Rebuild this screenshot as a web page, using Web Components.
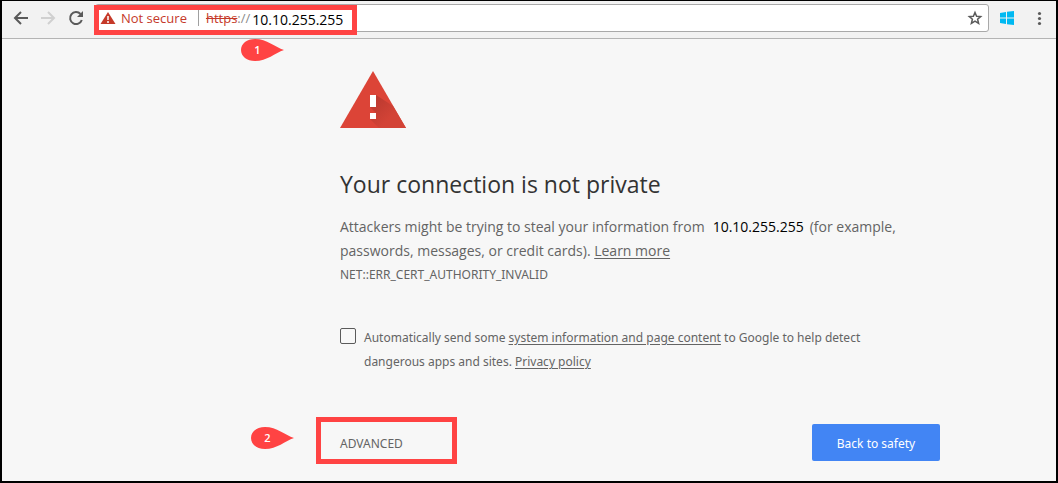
<!DOCTYPE html>
<html lang="en">
<head>
<meta charset="utf-8">
<title>Privacy error</title>
<style>
html { height: 100%; }
body { margin: 0; min-height: 100%; display: grid; font-family: "Open Sans", "Noto Sans", sans-serif; background: #000; }
</style>
</head>
<body>
<browser-window>
  <browser-toolbar slot="toolbar" host="10.10.255.255"></browser-toolbar>
  <privacy-error host="10.10.255.255"></privacy-error>
</browser-window>
<script>
const define = (name, html, setup) => {
  const template = document.createElement('template');
  template.innerHTML = html;
  customElements.define(name, class extends HTMLElement {
    constructor() {
      super();
      this.attachShadow({ mode: 'open' }).append(template.content.cloneNode(true));
    }
    connectedCallback() { if (setup) setup(this, this.shadowRoot); }
  });
};

define('step-marker', `
<style>
:host { display: block; position: relative; width: 43px; height: 22px; color: #fff; font: 600 11px/22px "Open Sans", sans-serif; }
svg { display: block; }
span { position: absolute; left: 0; top: 0; width: 33px; text-align: center; }
</style>
<svg width="43" height="22" viewBox="0 0 43 22" aria-hidden="true"><path d="M43 11C34 8 26 0 14 0C6 0 0 4.500 0 11S6 22 14 22C26 22 34 14 43 11Z" fill="#ff4343"/></svg>
<span><slot></slot></span>`);

define('browser-window', `
<style>
:host { display: flex; flex-direction: column; border: 2px solid #000; border-top-width: 1px; background: #f7f7f7; }
main { flex: 1; display: grid; grid-template-columns: minmax(16px, 338fr) minmax(0, 600px) minmax(16px, 116fr); }
main ::slotted(*) { grid-column: 2; }
</style>
<slot name="toolbar"></slot>
<main><slot></slot></main>`);

define('browser-toolbar', `
<style>
:host { display: flex; align-items: flex-start; height: 34px; padding: 3px 9px 0 0; border-bottom: 1px solid #b4b4b4; background: #f2f2f2; }
svg { display: block; }
button { display: block; border: 0; padding: 0; margin: 0; background: none; color: #5a5a5a; }
nav { display: flex; align-items: center; height: 28px; gap: 8px; padding: 0 9px 0 8px; }
.omnibox { position: relative; flex: 1; min-width: 0; display: flex; align-items: center; height: 26px; border: 1px solid #a9a9a9; border-radius: 3px; background: #fff; font-size: 13px; line-height: 20px; color: #c53929; padding: 0 4px; }
.warning { margin-right: 5px; }
.sep { width: 1px; height: 16px; background: #a0a0a0; margin: 0 7px 0 11px; }
.scheme { color: #8a8a8a; }
s { color: #c53929; }
input { flex: 1; min-width: 0; border: 0; outline: 0; padding: 4px 0 0 2px; margin: 0; background: none; font: 14px/20px "Open Sans", "Noto Sans", sans-serif; color: #000; }
.highlight { position: absolute; left: -2px; top: 0; width: 253px; height: 20px; border: 5px solid #ff4343; pointer-events: none; }
step-marker { position: absolute; left: 145px; top: 34px; }
.tools { display: flex; align-items: center; height: 28px; gap: 16px; padding-left: 10px; }
</style>
<nav aria-label="History">
  <button aria-label="Back"><svg width="20" height="20" viewBox="0 0 20 20" fill="none" stroke="currentColor" stroke-width="2"><path d="M18 10H5M11 4L5 10L11 16"/></svg></button>
  <button aria-label="Forward" style="color:#d0d0d0"><svg width="20" height="20" viewBox="0 0 20 20" fill="none" stroke="currentColor" stroke-width="2"><path d="M3 10H16M10 4L16 10L10 16"/></svg></button>
  <button aria-label="Reload"><svg width="20" height="20" viewBox="0 0 20 20" fill="none" stroke="currentColor" stroke-width="2"><path d="M14.500 6A6 6 0 1 0 15.800 12"/><path d="M17 3V9H11Z" fill="currentColor" stroke="none"/></svg></button>
</nav>
<div class="omnibox">
  <svg class="warning" width="16" height="14" viewBox="0 0 16 14" aria-hidden="true"><path d="M8 1L15.500 13H.5Z" fill="#c53929"/><path d="M8 5V9M8 10V12" stroke="#fff" stroke-width="1.500"/></svg>
  <span>Not secure</span>
  <span class="sep"></span>
  <span class="scheme"><s>https</s>://</span>
  <input type="text" aria-label="Address" spellcheck="false">
  <button aria-label="Bookmark this page"><svg width="18" height="18" viewBox="0 0 18 18" fill="none" stroke="currentColor" stroke-width="1.500"><path d="M9 3.500L10.600 7.300L14.700 7.600L11.600 10.300L12.600 14.300L9 12.100L5.400 14.300L6.400 10.300L3.300 7.600L7.400 7.300Z"/></svg></button>
  <div class="highlight"></div>
  <step-marker>1</step-marker>
</div>
<div class="tools">
  <button aria-label="Windows extension"><svg width="16" height="16" viewBox="0 0 16 16" fill="#00b9f2"><path d="M1 3L7 2V7.500H1ZM8 1.800L15 1V7.500H8ZM1 8.500H7V14L1 13ZM8 8.500H15V15L8 14.200Z"/></svg></button>
  <button aria-label="Menu"><svg width="16" height="16" viewBox="0 0 16 16" fill="currentColor"><circle cx="8.500" cy="3.500" r="1.600"/><circle cx="8.500" cy="8.500" r="1.600"/><circle cx="8.500" cy="13.500" r="1.600"/></svg></button>
</div>`, (el, root) => { root.querySelector('input').value = el.getAttribute('host'); });

define('privacy-error', `
<style>
:host { display: block; padding: 32px 0 16px; color: #646464; font-size: 14px; line-height: 24px; }
svg { display: block; }
h1 { margin: 40px 0 0; font-size: 23px; line-height: 32px; font-weight: 400; color: #333; }
p { margin: 15px 0 0; }
.line { display: flex; }
a { color: inherit; text-underline-offset: 2px; }
b { font-weight: 400; color: #000; margin: 0 6px 0 8px; }
.code, .optin { font-family: "Noto Sans", sans-serif; font-size: 12px; }
.optin { display: flex; gap: 8px; margin-top: 39px; }
input { appearance: none; flex: none; box-sizing: border-box; width: 16px; height: 16px; margin: 2px 0 0; border: 1px solid #5a5a5a; border-radius: 2px; background: #f7f7f7; }
.actions { display: flex; justify-content: space-between; align-items: center; margin-top: 50px; }
.details { position: relative; }
button { font: 12px/17px "Noto Sans", sans-serif; border: 0; border-radius: 2px; margin: 0; }
.advanced { padding: 11px 0 9px; color: #646464; background: none; }
.back { width: 128px; padding: 11px 0 9px; color: #fff; background: #4285f4; }
.highlight { position: absolute; left: -24px; top: -7px; width: 131px; height: 37px; border: 5px solid #ff4343; pointer-events: none; }
step-marker { position: absolute; left: -89px; top: 3px; }
</style>
<svg width="66" height="57" viewBox="0 1 66 57" aria-hidden="true">
  <defs><linearGradient id="shade" x1="36" y1="30" x2="52" y2="46" gradientUnits="userSpaceOnUse"><stop stop-color="#bd3a30"/><stop offset="1" stop-color="#d34336"/></linearGradient></defs>
  <path d="M33 1L66 58H0Z" fill="#dc4437"/>
  <path d="M36 25L53 36L66 58H39L30 49L36 43L30 37Z" fill="url(#shade)"/>
  <path d="M30 25H36V37H30ZM30 43H36V49H30Z" fill="#fff"/>
</svg>
<h1>Your connection is not private</h1>
<p><span class="line"><span>Attackers might be trying to steal your information from</span><b></b><span>(for example,</span></span><span>passwords, messages, or credit cards). <a href="#">Learn more</a></span></p>
<div class="code">NET::ERR_CERT_AUTHORITY_INVALID</div>
<div class="optin">
  <input type="checkbox" id="report">
  <label for="report">Automatically send some <a href="#">system information and page content</a> to Google to help detect<br>dangerous apps and sites. <a href="#">Privacy policy</a></label>
</div>
<div class="actions">
  <div class="details"><button class="advanced">ADVANCED</button><div class="highlight"></div><step-marker>2</step-marker></div>
  <button class="back">Back to safety</button>
</div>`, (el, root) => { root.querySelector('b').textContent = el.getAttribute('host'); });
</script>
</body>
</html>
